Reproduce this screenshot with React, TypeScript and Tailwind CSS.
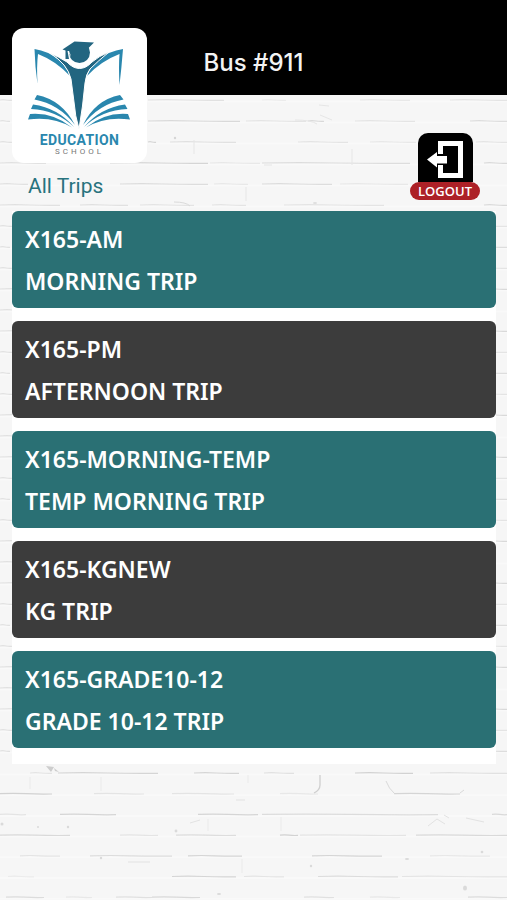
import React from 'react';

interface Trip {
  code: string;
  name: string;
}

const trips: Trip[] = [
  { code: 'X165-AM', name: 'MORNING TRIP' },
  { code: 'X165-PM', name: 'AFTERNOON TRIP' },
  { code: 'X165-MORNING-TEMP', name: 'TEMP MORNING TRIP' },
  { code: 'X165-KGNEW', name: 'KG TRIP' },
  { code: 'X165-GRADE10-12', name: 'GRADE 10-12 TRIP' },
];

// Mortar joints: [x, length, opacity] for each row of bricks
const upperRows: [number, number, number][][] = [
  [[0, 12, 0.6], [148, 76, 0.6], [262, 24, 0.3], [360, 50, 0.4], [450, 57, 0.5]],
  [[0, 10, 0.6], [148, 92, 0.8], [246, 60, 0.5], [308, 16, 0.8], [355, 60, 0.5], [470, 37, 0.7]],
  [[0, 12, 0.6], [148, 8, 0.9], [170, 66, 0.6], [298, 50, 0.5], [370, 46, 0.4], [476, 31, 0.5]],
  [[0, 46, 0.6], [110, 98, 0.9], [210, 50, 0.4], [262, 148, 0.7], [484, 23, 0.8]],
  [[0, 28, 0.6], [120, 88, 0.7], [214, 34, 0.4], [262, 70, 0.7], [340, 68, 0.4]],
  [[0, 60, 0.6], [80, 48, 0.6], [140, 54, 0.5], [212, 34, 0.5], [284, 100, 0.5], [484, 23, 0.8]],
];

const lowerRows: [number, number, number][][] = [
  [[30, 22, 0.5], [58, 100, 0.9], [194, 45, 0.9], [264, 30, 0.6], [355, 58, 1], [430, 77, 0.6]],
  [[0, 52, 1], [94, 50, 0.5], [172, 62, 0.5], [280, 38, 0.4], [394, 66, 0.9]],
  [[0, 26, 0.5], [60, 56, 0.9], [198, 60, 0.9], [262, 176, 0.7], [492, 15, 0.8]],
  [[0, 70, 0.8], [120, 38, 0.5], [176, 60, 0.7], [280, 18, 1], [300, 106, 0.5], [416, 91, 0.8]],
  [[20, 40, 0.5], [90, 82, 0.7], [188, 54, 0.9], [312, 70, 0.9], [430, 60, 0.4]],
  [[8, 26, 0.3], [172, 64, 0.9], [244, 40, 0.5], [318, 80, 0.7], [402, 105, 0.5]],
  [[6, 38, 0.7], [66, 26, 0.4], [116, 36, 0.6], [152, 48, 0.8], [304, 30, 0.6], [370, 30, 0.4], [468, 39, 0.7]],
];

// The wall is 40 rows high, the first joint sits at the bottom of the header
const rowAt = (r: number) => (r < 32 ? upperRows[r % upperRows.length] : lowerRows[(r - 32) % lowerRows.length]);

const BrickWall: React.FC = () => (
  <svg className="absolute inset-0 -z-10 h-full w-full" aria-hidden="true">
    <defs>
      <pattern id="bricks" width="507" height="840" y="99" patternUnits="userSpaceOnUse">
        <rect width="507" height="840" fill="#f6f6f6" />
        {Array.from({ length: 40 }, (_, r) => {
          // joints are slightly closer together in the lower part of the wall
          const y = r < 32 ? 1 + r * 21 : 674 + (r - 32) * 20.7;
          return (
            <g key={r} fill="none">
              <path d={`M0 ${y + 1.5}H507`} stroke="#f9f9f9" strokeWidth="2" />
              {rowAt(r).map(([x, length, opacity]) => (
                <path
                  key={x}
                  d={`M${x} ${y}q${length / 4} -.6 ${length / 2} 0t${length / 2} .3`}
                  stroke="#d2d2d2"
                  strokeWidth="1.2"
                  opacity={opacity}
                />
              ))}
            </g>
          );
        })}
        <g fill="none" stroke="#e6e6e6">
          <path d="M319 6l10 1M320 16l12 5M295 21q16 0 22 4M194 41v14M246 88v14M352 50v16M264 66h8" />
          <path d="M174 103q12 0 16 4" stroke="#dadada" />
        </g>
        <circle cx="175" cy="39" r="1.2" fill="#d6d6d6" />
        <ellipse cx="315" cy="104" rx="2" ry="1" fill="#dedede" />
        <g transform="translate(0 673)">
          <g fill="none" stroke="#ebebeb">
            <path d="M101 5v14M248 3v8M30 5v12M208 47v12M281 45v14M242 87v14M188 128v14" />
            <path d="M320 3v10q0 5-6 8" stroke="#cfcfcf" strokeWidth="1.3" />
            <path d="M386 9q3 8 8 12M460 21l4-3" stroke="#d9d9d9" />
            <path d="M428 54l9-7 8 5M444 43l5 3M466 46l18 4M450 141l14-8M190 51l10-3M236 28h9M128 90h22" stroke="#e2e2e2" />
          </g>
          <g fill="#dadada">
            <path d="M46-6l8 1-3 5zM54-4l5 4-4-1z" fill="#cdcdcd" />
            <circle cx="68" cy="55" r="1.2" />
            <circle cx="38" cy="55" r="1" />
            <circle cx="176" cy="59" r="1.4" />
            <circle cx="2" cy="52" r="1.5" />
            <circle cx="311" cy="94" r="1.2" />
            <circle cx="482" cy="80" r="1.3" />
            <circle cx="101" cy="86" r="1.2" />
            <ellipse cx="407" cy="87" rx="2" ry="1" />
            <ellipse cx="465" cy="116" rx="2" ry="2.5" />
            <ellipse cx="219" cy="122" rx="2" ry="1" />
          </g>
        </g>
      </pattern>
    </defs>
    <rect width="100%" height="100%" fill="url(#bricks)" />
  </svg>
);

const SchoolLogo: React.FC = () => (
  <div className="absolute left-3 top-7 flex h-[135px] w-[135px] flex-col items-center rounded-xl bg-white">
    <svg className="h-[104px] w-[135px] shrink-0" viewBox="12 28 135 104" aria-hidden="true">
      <g fill="#2a87ae">
        <path d="M34.500 49Q48 51 58 59.500Q66 65 70 76Q56 61 38 54Q36.500 66 37.500 84Q35 67 34.500 49Z" />
        <path d="M123 49Q109 51 99 59.500Q91 65 87 76Q101 61 119.500 54Q118.500 66 119.500 85Q121.500 68 123 49Z" />
        <path d="M37 95L34.500 99.500Q59 104 75 125Q62 100 37 95Z" />
        <path d="M33 104.500L31 109Q56 110 74 127Q58 108 33 104.500Z" />
        <path d="M30 114L28 119.500Q53 116 72 127.500Q53 112 30 114Z" />
        <path d="M120 95L123.500 99.500Q99 104 83 125Q95 100 120 95Z" />
        <path d="M125 104.500L127.500 109Q102 110 84 127Q100 108 125 104.500Z" />
        <path d="M128 114L130 119.500Q105 116 86 127.500Q105 112 128 114Z" />
      </g>
      <path
        fill="#226580"
        stroke="#fff"
        strokeWidth="1"
        d="M50 53Q59 57 67 62Q73 68.500 79.500 68.500Q86 68.500 92 62Q99 56 109 52Q98 61 90 69Q86 74 85 83Q83 106 79 129Q75 116 74 102L71 79Q69 71 64 65Q58 58 50 53Z"
      />
      <circle cx="79.500" cy="52.500" r="10.500" fill="#226580" />
      <path fill="#226580" d="M62.500 49.500L74.500 41.500L94 42.500L88 48.500V53H70L69 51L67.500 51L69 59H65.500V50.500Z" />
      <path d="M68.500 51Q71 54 69.500 59" fill="none" stroke="#fff" strokeWidth="0.8" />
    </svg>
    <span className="font-['Roboto',sans-serif] text-[14px] font-bold leading-4 tracking-wide text-[#2a87ae]">EDUCATION</span>
    <span className="font-['Roboto',sans-serif] text-[8px] leading-2 tracking-[3px] text-[#777]">SCHOOL</span>
  </div>
);

const LogoutButton: React.FC = () => (
  <button type="button" className="flex flex-col items-center">
    <svg className="h-[49px] w-[55px] rounded-t-[10px] bg-black" viewBox="0 0 55 49" aria-hidden="true">
      <path d="M22.500 21V10.500H42.500V42.500H22.500V32" fill="none" stroke="#fff" strokeWidth="5" />
      <path d="M9 26.500L19 19V23H29V30.500H19V34.500Z" fill="#fff" />
    </svg>
    <span className="h-[18px] rounded-full bg-[#ad2127] px-2 font-['Open_Sans',sans-serif] text-[13px] font-semibold leading-[18px] text-white">
      LOGOUT
    </span>
  </button>
);

const App: React.FC = () => {
  return (
    <div className="relative isolate min-h-screen">
      <BrickWall />
      <header className="flex h-[95px] items-end justify-center bg-black pb-4">
        <h1 className="font-['Inter',sans-serif] text-2xl font-medium text-[#f3f3f3]">Bus #911</h1>
      </header>
      <SchoolLogo />

      <main className="pl-3 pr-[11px]">
        <div className="flex h-[116px] items-end justify-between pb-[11px] pl-4 pr-4">
          <h2 className="font-['Roboto',sans-serif] text-[21px] leading-7 text-[#28737e]">All Trips</h2>
          <LogoutButton />
        </div>
        <ul className="flex flex-col gap-[13px] bg-white pb-4">
          {trips.map((trip, index) => (
            <li key={trip.code}>
              <button
                type="button"
                className={`flex h-[97px] w-full flex-col justify-center rounded-md px-[13px] text-left font-['Noto_Sans',sans-serif] text-[23px] font-semibold leading-[42px] text-white ${
                  index % 2 === 0 ? 'bg-[#2a7074]' : 'bg-[#3c3c3c]'
                }`}
              >
                <span>{trip.code}</span>
                <span>{trip.name}</span>
              </button>
            </li>
          ))}
        </ul>
      </main>
    </div>
  );
};

export default App;
